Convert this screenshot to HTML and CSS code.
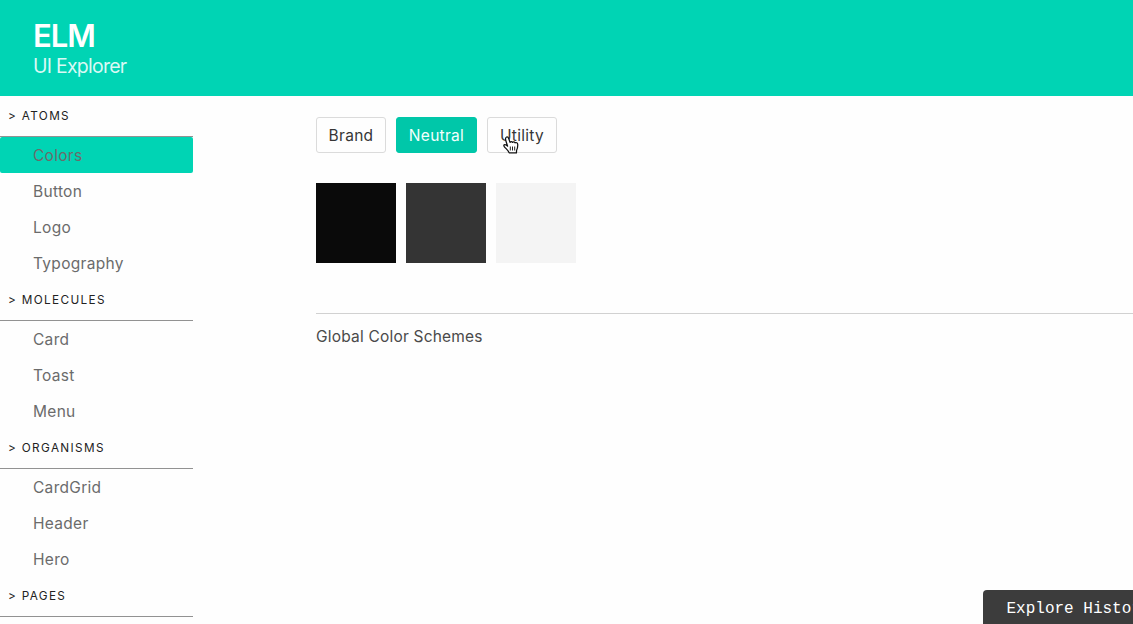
FILE: index.html
```html
<!DOCTYPE html>
<html lang="en">
<head>
<meta charset="utf-8">
<title>ELM UI Explorer</title>
<link rel="stylesheet" href="styles.css">
</head>
<body>
<header class="hero">
  <h1 class="title">ELM</h1>
  <p class="subtitle">UI Explorer</p>
</header>
<div class="layout">
  <nav class="menu">
    <h2 class="menu-label">&gt; ATOMS</h2>
    <a class="menu-item active">Colors</a>
    <a class="menu-item">Button</a>
    <a class="menu-item">Logo</a>
    <a class="menu-item">Typography</a>
    <h2 class="menu-label">&gt; MOLECULES</h2>
    <a class="menu-item">Card</a>
    <a class="menu-item">Toast</a>
    <a class="menu-item">Menu</a>
    <h2 class="menu-label">&gt; ORGANISMS</h2>
    <a class="menu-item">CardGrid</a>
    <a class="menu-item">Header</a>
    <a class="menu-item">Hero</a>
    <h2 class="menu-label">&gt; PAGES</h2>
  </nav>
  <main class="content">
    <div class="tabs">
      <button class="tab tab-brand">Brand</button>
      <button class="tab tab-neutral selected">Neutral</button>
      <button class="tab tab-utility">Utility
        <svg class="cursor" width="16" height="18" viewBox="0 0 16 18"><path d="M4.6 10.2 3 5.2C2.5 3.7 2.3 1.5 3.6 1 4.8.6 5.4 1.6 5.8 2.8L7 6.4C7.6 5.4 9 5.4 9.6 6.4 10.3 5.6 11.6 5.8 12 6.8 13.2 6.2 14.6 6.8 14.7 8.2 14.9 10.6 14.8 12 13.6 14.2L13.4 16.9H6.2C5.6 14.8 3.6 13.2 1.4 10.8.4 9.7.8 8.5 2 8.6 3.1 8.7 3.8 9.5 4.6 10.2Z" fill="#fff" stroke="#111" stroke-width="1.25" stroke-linejoin="round"/><path d="M7.3 10.5v4M9.5 10.5v4M11.7 10.5v4" stroke="#222" stroke-width="1"/></svg>
      </button>
    </div>
    <div class="swatches">
      <div class="swatch black"></div>
      <div class="swatch dark"></div>
      <div class="swatch light"></div>
    </div>
    <p class="description">Global Color Schemes</p>
  </main>
</div>
<div class="history">Explore History</div>
</body>
</html>
```
FILE: styles.css
```css
* { box-sizing: border-box; }
body {
  margin: 0;
  height: 624px;
  overflow: hidden;
  background: #fefefe;
  font-family: Inter, "Liberation Sans", sans-serif;
  font-size: 15.5px;
  color: #4a4a4a;
}
.hero { height: 96px; padding: 18px 33px 0; background: #00d4b4; color: #fff; }
.title { margin: 0; font-size: 31px; line-height: 36px; font-weight: 600; letter-spacing: -1px; }
.subtitle { margin: 0; font-size: 19.5px; line-height: 25px; font-weight: 400; letter-spacing: -.75px; color: #d9f9f4; }
.layout { display: flex; height: 528px; overflow: hidden; }
.menu { width: 193px; flex: none; padding-top: 1px; }
.menu-label {
  margin: 0;
  height: 40px;
  padding-left: 8px;
  border-bottom: 1px solid #929292;
  font-size: 11.75px;
  line-height: 38px;
  font-weight: 400;
  letter-spacing: 1.35px;
  color: #222;
}
.menu-item { display: block; height: 36px; padding-left: 33px; line-height: 37px; letter-spacing: .3px; color: #6b6b6b; }
.active { background: #00d4b4; border-radius: 2px; }
.content { flex: 1; margin-left: 123px; padding-top: 21px; }
.tabs { display: flex; gap: 10px; }
.tab {
  height: 36px;
  padding: 0;
  border: 1px solid #dbdbdb;
  border-radius: 3px;
  background: #fefefe;
  font: inherit;
  letter-spacing: .3px;
  color: #363636;
}
.tab-brand, .tab-utility { width: 70px; }
.tab-neutral { width: 81px; }
.tab-utility { position: relative; }
.selected { background: #00c7a9; border-color: #00c7a9; color: #f4fffd; }
.cursor { position: absolute; left: 15px; top: 18px; }
.swatches { display: flex; gap: 10px; margin: 30px 0 50px; }
.swatch { width: 80px; height: 80px; }
.black { background: #0a0a0a; }
.dark { background: #343434; }
.light { background: #f4f4f4; }
.description { margin: 0; padding-top: 11px; border-top: 1px solid #d1d1d1; line-height: 24px; letter-spacing: .2px; }
.history {
  position: absolute;
  left: 983px;
  top: 590px;
  width: 150px;
  height: 34px;
  padding-left: 23.5px;
  overflow: hidden;
  white-space: nowrap;
  border-top-left-radius: 4px;
  background: #3c3c3c;
  color: #fff;
  font: 16px/38px "Liberation Mono", monospace;
}
```
